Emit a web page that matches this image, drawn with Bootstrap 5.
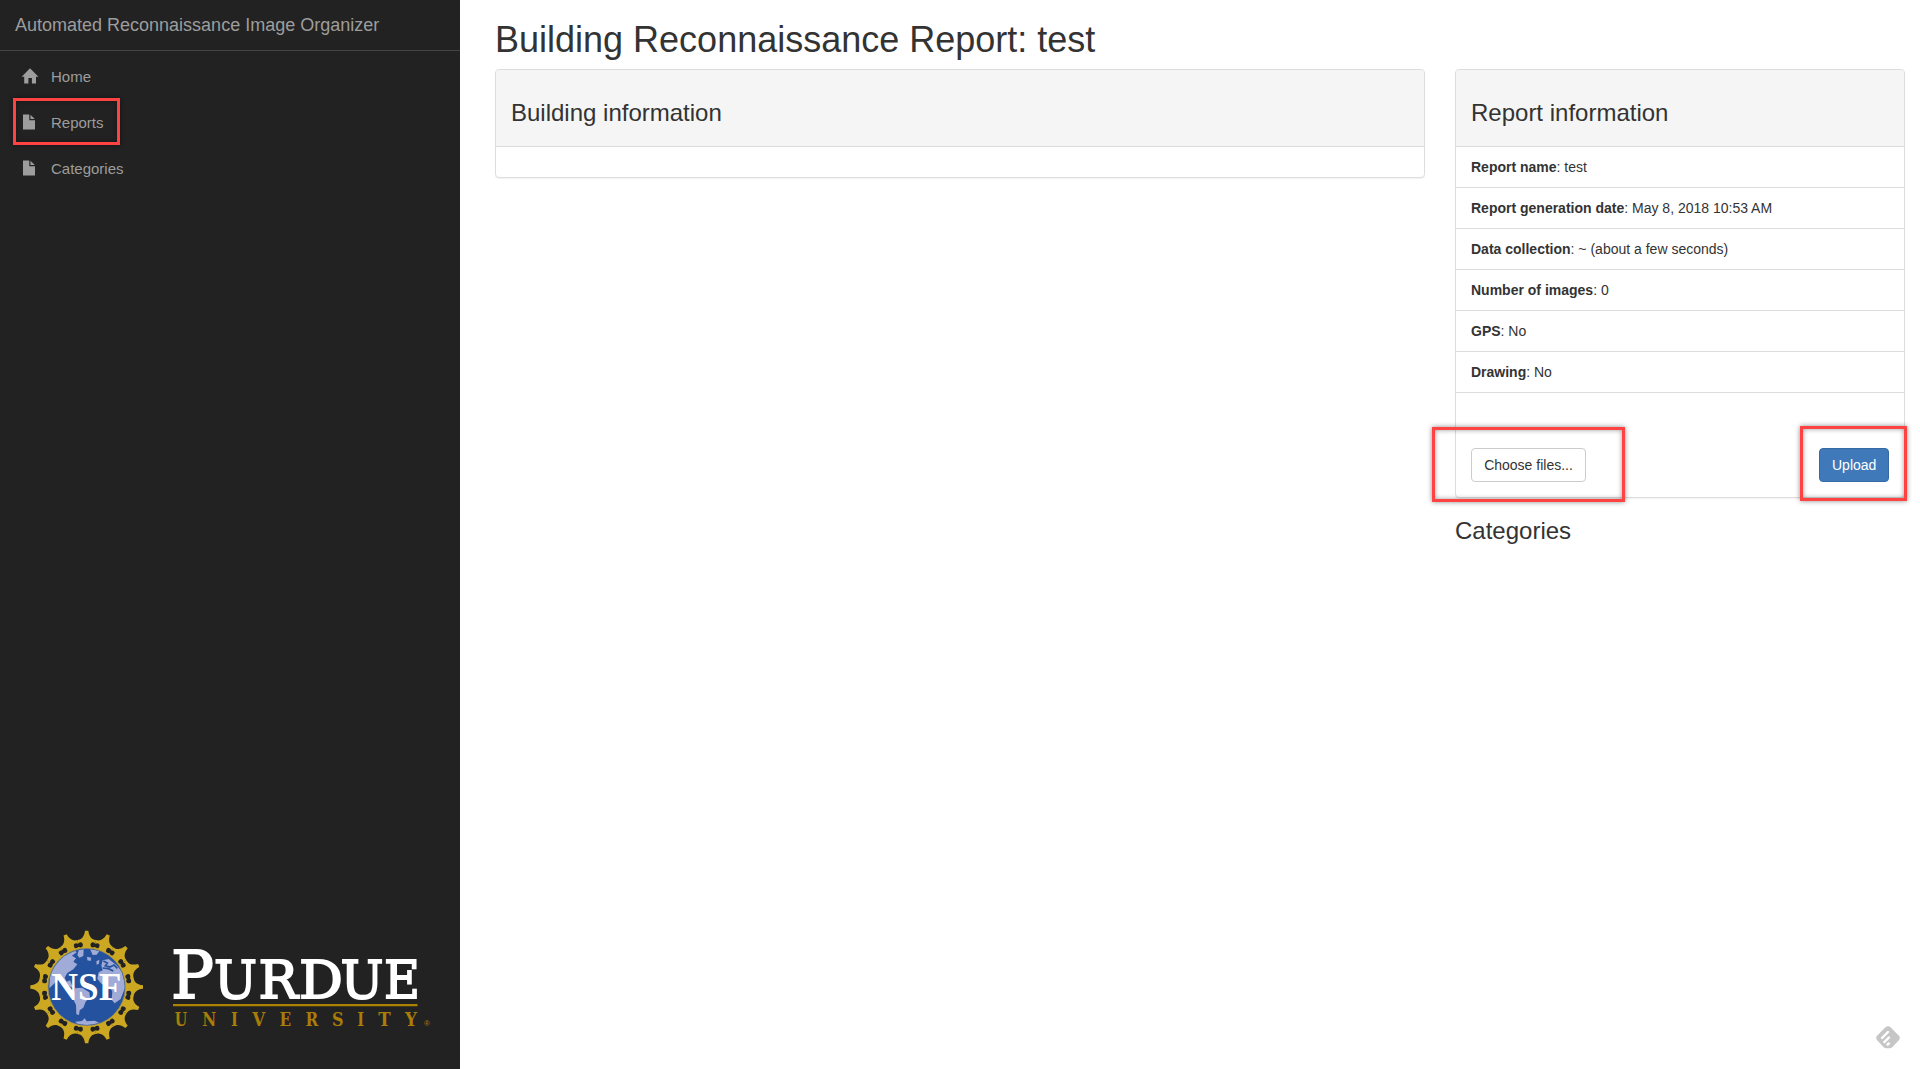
<!DOCTYPE html>
<html lang="en">
<head>
<meta charset="utf-8">
<title>Automated Reconnaissance Image Organizer</title>
<link rel="stylesheet" href="https://cdn.jsdelivr.net/npm/bootstrap@5.3.0/dist/css/bootstrap.min.css">
<style>
body { font-family: "Liberation Sans", Arial, sans-serif; font-size: 14px; line-height: 20px; color: #333; background: #fff; overflow: hidden; }
.sidebar { width: 460px; background: #222; color: #9d9d9d; }
.brand { height: 51px; padding: 15px; font-size: 18px; border-bottom: 1px solid #444; color: #9d9d9d; }
.side-nav { padding-top: 2px; }
.side-nav .nav-link { height: 46px; padding: 14px 15px 12px 21px; font-size: 15px; line-height: 20px; color: #9d9d9d; display: flex; align-items: center; }
.side-nav svg { width: 18px; height: 16px; margin-right: 12px; position: relative; top: -1px; }
.logos { padding: 0 29px 24px; }
.main { padding: 0 15px 0 35px; }
.main .row { --bs-gutter-x: 30px; }
h1 { font-size: 36px; line-height: 39.6px; font-weight: 400; margin: 20px 0 9.4px; }
h3 { font-size: 24px; line-height: 26.4px; font-weight: 400; margin: 20px 0 10px; }
.card { --bs-card-border-color: #ddd; --bs-card-border-radius: 4px; --bs-card-inner-border-radius: 3px; color: #333; box-shadow: 0 1px 1px rgba(0,0,0,.05); }
.card-header { padding: 10px 15px; height: 77px; background: #f5f5f5; border-bottom-color: #ddd; }
.card > .list-group { border-top: 0; border-bottom: 1px solid #ddd; }
.list-group-item { padding: 10px 15px; height: 41px; color: #333; border-color: #ddd; }
.list-group-item:last-child { height: 40px; }
.list-group-item strong { font-weight: 700; }
.card-header + .list-group .list-group-item { border-top: 0; }
.empty-body { height: 30px; }
.btn { font-size: 14px; line-height: 20px; padding: 6px 12px; border-radius: 4px; }
.btn-choose { border-color: #ccc; background: #fff; color: #333; width: 115px; }
.btn-upload { background: #4079b9; border-color: #356aa5; color: #fff; width: 70px; }
.upload-area { height: 104px; padding: 0 15px 15px; }
.callout { position: absolute; border: 3px solid #ff4242; box-shadow: 0 0 5px rgba(0,0,0,.45), inset 0 0 5px rgba(0,0,0,.4); pointer-events: none; z-index: 3; }
.callout-nav { left: 13px; top: -1px; width: 107px; height: 47px; }
.callout-choose { left: -39px; top: -21px; width: 193px; height: 75px; }
.callout-upload { right: -18px; top: -22px; width: 107px; height: 75px; }
.helper { position: absolute; right: 20px; bottom: 20px; }
</style>
<script src="https://cdn.jsdelivr.net/npm/bootstrap@5.3.0/dist/js/bootstrap.bundle.min.js"></script>
</head>
<body>
<div class="d-flex vh-100 position-relative">
  <aside class="sidebar d-flex flex-column flex-shrink-0">
    <div class="brand">Automated Reconnaissance Image Organizer</div>
    <ul class="nav flex-column side-nav">
      <li class="nav-item"><a class="nav-link" href="#"><svg viewBox="0 0 18 16" fill="#9d9d9d"><path d="M9 .2 17.5 8.800H15V15.500H10.900V10H7.400V15.500H3.200V8.800H.7Z"/></svg>Home</a></li>
      <li class="nav-item position-relative"><a class="nav-link" href="#"><svg viewBox="0 0 18 16" fill="#9d9d9d"><path d="M2 .5H8.3V6.2H14V15.5H2ZM9.5 .8 13.8 5.1H9.5Z"/></svg>Reports</a><span class="callout callout-nav"></span></li>
      <li class="nav-item"><a class="nav-link" href="#"><svg viewBox="0 0 18 16" fill="#9d9d9d"><path d="M2 .5H8.3V6.2H14V15.5H2ZM9.5 .8 13.8 5.1H9.5Z"/></svg>Categories</a></li>
    </ul>
    <div class="logos mt-auto d-flex">
      <svg width="116" height="116" viewBox="-173 -174 348 348">
        <defs>
          <g id="tooth">
            <path fill="#cba722" d="M-5 -169H5C7 -152 15 -142 28 -141L26 -130Q20 -136 14 -133Q10 -130 12 -122Q14 -117 25 -120L23 -112H-23L-25 -120Q-14 -117 -12 -122Q-10 -130 -14 -133Q-20 -136 -26 -130L-28 -141C-15 -142 -7 -152 -5 -169Z"/>
          </g>
          <g id="quad">
            <use href="#tooth"/><use href="#tooth" transform="rotate(22.5)"/><use href="#tooth" transform="rotate(45)"/><use href="#tooth" transform="rotate(67.5)"/>
          </g>
          <clipPath id="disc"><circle r="114"/></clipPath>
        </defs>
        <use href="#quad"/><use href="#quad" transform="rotate(90)"/><use href="#quad" transform="rotate(180)"/><use href="#quad" transform="rotate(270)"/>
        <circle r="116" fill="#24529f" stroke="#958c62" stroke-width="2"/>
        <g clip-path="url(#disc)" fill="#a0abd7">
          <path d="M-110 -40C-98 -86 -68 -108 -38 -111L-30 -104-44 -94-32 -86-40 -76-28 -68-40 -53-58 -42-66 -28-60 -16-50 -20-45 -8-34 3-48 0-64 -10-82 -24-98 -10-112 4Z"/>
          <path d="M-24 -110-9 -114-10 -93-22 -88-28 -96ZM10 -114 39 -109 30 -97 18 -96ZM1 -91 14 -88 12 -78 2 -80ZM-54 -88-38 -80-52 -71Z"/>
          <path d="M-35 4-14 2 8 16 10 30-3 44-10 62-21 70-23 84-31 82-32 54-41 35Z"/>
          <path d="M48 -80 66 -84 88 -67 107 -46 116 0 102 36 84 49 75 38 77 12 62 -3 44 -10 32 -25 36 -44 48 -50 44 -64Z"/>
          <path d="M29 -77 38 -82 37 -70 30 -67ZM-34 104-14 102-6 94 0 103 24 101 39 108 20 119-22 119Z"/>
        </g>
        <path d="M50 -78 62 -72 56 -64 70 -60 82 -66 92 -56M48 -57 65 -55 80 -48" fill="none" stroke="#24529f" stroke-width="5"/>
        <text x="-106" y="40" textLength="210" lengthAdjust="spacingAndGlyphs" font-family="Liberation Serif, serif" font-weight="700" font-size="118" fill="#fff">NSF</text>
      </svg>
      <svg width="286" height="116" viewBox="145 929 286 116">
        <g fill="#fff" stroke="#fff" stroke-width="1.800" font-family="DejaVu Serif, serif">
          <text x="171" y="998" font-size="66" textLength="43" lengthAdjust="spacingAndGlyphs">P</text>
          <g font-size="53">
            <text x="214" y="998" textLength="43" lengthAdjust="spacingAndGlyphs">U</text>
            <text x="258.500" y="998" textLength="39.500" lengthAdjust="spacingAndGlyphs">R</text>
            <text x="299" y="998" textLength="44" lengthAdjust="spacingAndGlyphs">D</text>
            <text x="340.500" y="998" textLength="43" lengthAdjust="spacingAndGlyphs">U</text>
            <text x="384" y="998" textLength="36" lengthAdjust="spacingAndGlyphs">E</text>
          </g>
        </g>
        <path d="M173 1004H417.500V1006.200H173Z" fill="#ad8200"/>
        <g fill="#a87d08" font-family="DejaVu Serif, serif" font-weight="700" font-size="17.800" text-anchor="middle">
          <text transform="translate(181 1025.600) scale(.8 1)">U</text><text transform="translate(209.300 1025.600) scale(.86 1)">N</text><text transform="translate(234.500 1025.600) scale(.83 1)">I</text><text transform="translate(258.700 1025.600) scale(.94 1)">V</text><text transform="translate(285.300 1025.600) scale(.86 1)">E</text><text transform="translate(311.800 1025.600) scale(.86 1)">R</text><text transform="translate(337.800 1025.600) scale(.9 1)">S</text><text transform="translate(360.800 1025.600) scale(.83 1)">I</text><text transform="translate(384.500 1025.600) scale(.94 1)">T</text><text transform="translate(411 1025.600) scale(.94 1)">Y</text>
        </g>
        <text x="424" y="1025.500" font-family="Liberation Sans, sans-serif" font-size="8" fill="#a87d08">®</text>
      </svg>
    </div>
  </aside>
  <main class="main flex-grow-1">
    <h1>Building Reconnaissance Report: test</h1>
    <div class="row">
      <div class="col-8">
        <div class="card">
          <div class="card-header"><h3>Building information</h3></div>
          <div class="card-body p-0 empty-body"></div>
        </div>
      </div>
      <div class="col-4">
        <div class="card">
          <div class="card-header"><h3>Report information</h3></div>
          <ul class="list-group list-group-flush">
            <li class="list-group-item"><strong>Report name</strong>: test</li>
            <li class="list-group-item"><strong>Report generation date</strong>: May 8, 2018 10:53 AM</li>
            <li class="list-group-item"><strong>Data collection</strong>: ~ (about a few seconds)</li>
            <li class="list-group-item"><strong>Number of images</strong>: 0</li>
            <li class="list-group-item"><strong>GPS</strong>: No</li>
            <li class="list-group-item"><strong>Drawing</strong>: No</li>
          </ul>
          <div class="upload-area d-flex justify-content-between align-items-end">
            <div class="position-relative"><button class="btn btn-choose text-nowrap">Choose files...</button><span class="callout callout-choose"></span></div>
            <div class="position-relative"><button class="btn btn-upload text-nowrap">Upload</button><span class="callout callout-upload"></span></div>
          </div>
        </div>
        <h3>Categories</h3>
      </div>
    </div>
  </main>
  <svg class="helper" width="24" height="23" viewBox="0 0 24 23"><path d="M9.500 1.200Q12 -.8 14.500 1.200L23 9.700Q24.600 11.800 23 14L16.500 21Q15.300 22.300 13.500 22.300H10.500Q8.700 22.300 7.500 21L1 14Q-.6 11.800 1 9.700Z" fill="#c6c6c6"/><path d="M6 12 12 6M8.300 16.200 13 11.500M11.500 18.500 12.800 17.500" stroke="#fff" stroke-width="2.400" stroke-linecap="round"/></svg>
</div>
</body>
</html>
